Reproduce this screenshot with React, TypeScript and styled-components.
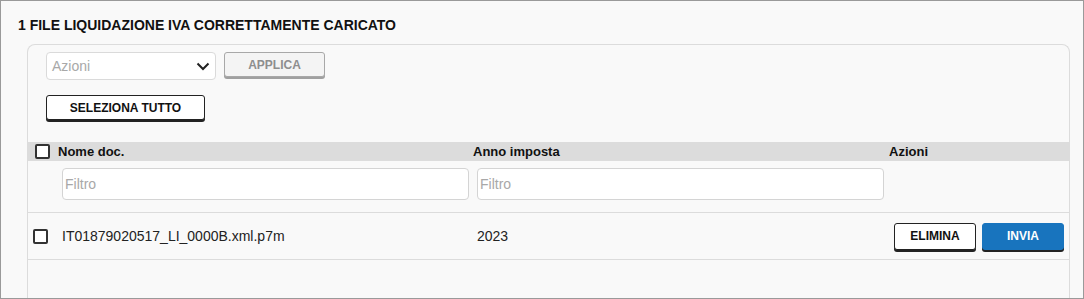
import styled, { createGlobalStyle } from "styled-components";

const GlobalStyle = createGlobalStyle`
  html, body {
    margin: 0;
    padding: 0;
    background: #ffffff;
    font-family: "Liberation Sans", Arial, sans-serif;
  }
`;

function Chevron() {
  return (
    <svg width="14" height="9" viewBox="0 0 14 9">
      <path d="M1.5 1.5 L7 7 L12.5 1.5" fill="none" stroke="#222" strokeWidth="2" />
    </svg>
  );
}

function App() {
  return (
    <>
      <GlobalStyle />
      <Frame>
        <Title>1 FILE LIQUIDAZIONE IVA CORRETTAMENTE CARICATO</Title>
        <Panel>
          <Toolbar>
            <SelectBox>
              <Placeholder>Azioni</Placeholder>
              <Chevron />
            </SelectBox>
            <Button disabled>APPLICA</Button>
          </Toolbar>
          <SelectAll>
            <Button>SELEZIONA TUTTO</Button>
          </SelectAll>
          <HeaderRow>
            <CheckCell>
              <Check />
            </CheckCell>
            <HeadCell>Nome doc.</HeadCell>
            <HeadCell>Anno imposta</HeadCell>
            <HeadCell>Azioni</HeadCell>
          </HeaderRow>
          <FilterRow>
            <div />
            <FilterInput placeholder="Filtro" />
            <FilterInput placeholder="Filtro" />
            <div />
          </FilterRow>
          <DataRow>
            <CheckCell>
              <Check />
            </CheckCell>
            <Cell>IT01879020517_LI_0000B.xml.p7m</Cell>
            <Cell>2023</Cell>
            <Actions>
              <Button>ELIMINA</Button>
              <Button $primary>INVIA</Button>
            </Actions>
          </DataRow>
          <Empty />
        </Panel>
      </Frame>
    </>
  );
}

const Frame = styled.div`
  box-sizing: border-box;
  width: 1084px;
  height: 299px;
  border: 1px solid #9a9a9a;
  background: #f9f9f9;
  padding: 17px 13px 0 26px;
  overflow: hidden;
`;

const Title = styled.div`
  font-size: 14px;
  font-weight: bold;
  color: #111;
  margin-left: -9px;
  height: 26px;
  line-height: 14px;
`;

const Panel = styled.div`
  border: 1px solid #dcdcdc;
  border-bottom: none;
  border-radius: 8px 8px 0 0;
  background: #f9f9f9;
  height: 300px;
`;

const Toolbar = styled.div`
  display: flex;
  gap: 8px;
  padding: 7px 0 0 18px;
  align-items: flex-start;
`;

const SelectBox = styled.div`
  box-sizing: border-box;
  width: 170px;
  height: 28px;
  border: 1px solid #dadada;
  border-radius: 4px;
  background: #fff;
  display: flex;
  align-items: center;
  justify-content: space-between;
  padding: 0 5px 0 5px;
`;

const Placeholder = styled.span`
  font-size: 14px;
  color: #a8a8a8;
`;

const Button = styled.button<{ $primary?: boolean }>`
  box-sizing: border-box;
  height: 27px;
  padding: 0 14px;
  font-family: "Liberation Sans", Arial, sans-serif;
  font-size: 12px;
  font-weight: bold;
  border-radius: 3px;
  border: 1px solid ${(p) => (p.$primary ? "#1874be" : "#222")};
  background: ${(p) => (p.$primary ? "#1874be" : "#fff")};
  color: ${(p) => (p.$primary ? "#fff" : "#111")};
  box-shadow: 0 2px 0 #222;
  cursor: pointer;

  &:disabled {
    border-color: #a8a8a8;
    background: #f4f4f4;
    color: #8e8e8e;
    box-shadow: 0 2px 0 #a0a0a0;
    width: 101px;
    height: 25px;
    cursor: default;
  }
`;

const SelectAll = styled.div`
  padding: 15px 0 0 18px;
  height: 33px;

  & > button {
    width: 159px;
    height: 25px;
  }
`;

const cols = "30px 415px 416px 1fr";

const HeaderRow = styled.div`
  display: grid;
  grid-template-columns: ${cols};
  align-items: center;
  height: 19px;
  background: #dcdcdc;
  margin-top: 14px;
`;

const HeadCell = styled.div`
  font-size: 13px;
  font-weight: bold;
  color: #111;
`;

const CheckCell = styled.div`
  display: flex;
  align-items: center;
  padding-left: 7px;
`;

const Check = styled.span`
  box-sizing: border-box;
  width: 15px;
  height: 15px;
  border: 2px solid #333;
  border-radius: 2px;
  background: #fff;
`;

const FilterRow = styled.div`
  display: grid;
  grid-template-columns: ${cols};
  align-items: center;
  height: 51px;
  border-bottom: 1px solid #dcdcdc;

  & > input {
    margin-left: 4px;
    width: 407px;
  }
`;

const FilterInput = styled.input`
  box-sizing: border-box;
  height: 32px;
  margin-top: -5px;
  border: 1px solid #d4d4d4;
  border-radius: 4px;
  background: #fff;
  font-family: "Liberation Sans", Arial, sans-serif;
  font-size: 14px;
  padding: 0 2px;
  outline: none;

  &::placeholder {
    color: #a8a8a8;
  }
`;

const DataRow = styled.div`
  display: grid;
  grid-template-columns: ${cols};
  align-items: center;
  height: 46px;
  border-bottom: 1px solid #dcdcdc;

  & > ${CheckCell} {
    padding-left: 5px;
  }
`;

const Cell = styled.div`
  font-size: 14px;
  color: #222;
  padding-left: 4px;
`;

const Actions = styled.div`
  display: flex;
  gap: 6px;
  padding-left: 5px;

  & > button {
    width: 82px;
  }
`;

const Empty = styled.div`
  height: 40px;
`;

export default App;
